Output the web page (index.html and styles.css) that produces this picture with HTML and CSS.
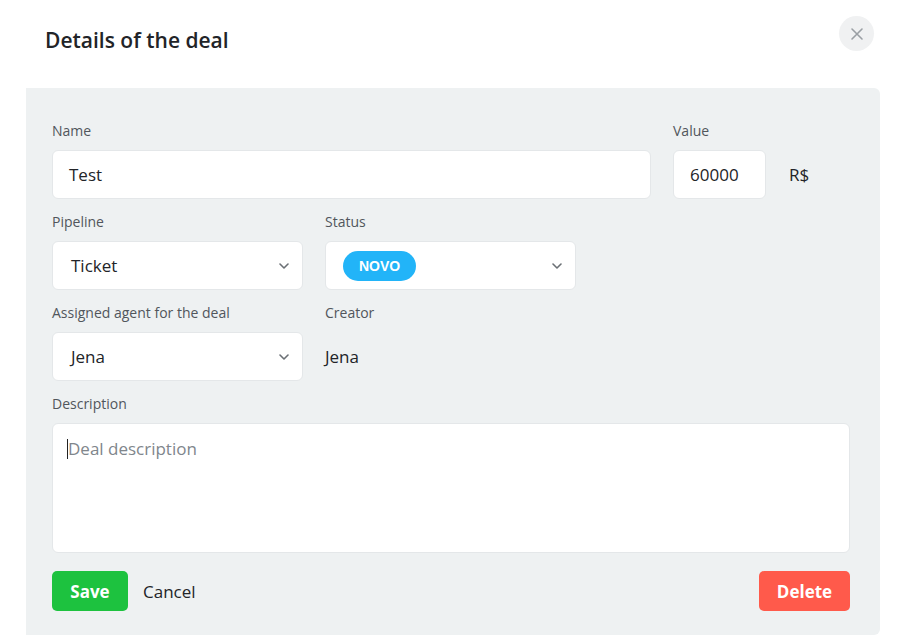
FILE: index.html
```html
<!DOCTYPE html>
<html>
<head>
<meta charset="utf-8">
<link rel="stylesheet" href="styles.css">
</head>
<body>
<div class="modal">
  <div class="header">
    <h1 class="title">Details of the deal</h1>
    <button class="close" aria-label="Close">
      <svg width="14" height="14" viewBox="0 0 14 14"><path d="M2 2L12 12M12 2L2 12" stroke="#9a9fa4" stroke-width="1.6" stroke-linecap="round" fill="none"/></svg>
    </button>
  </div>
  <div class="panel">
    <div class="row">
      <div class="field f-name">
        <label class="label">Name</label>
        <div class="input">Test</div>
      </div>
      <div class="field f-value">
        <label class="label">Value</label>
        <div class="value-line">
          <div class="input value-input">60000</div>
          <span class="currency">R$</span>
        </div>
      </div>
    </div>
    <div class="row">
      <div class="field f-half">
        <label class="label">Pipeline</label>
        <div class="input select"><span class="sel-text">Ticket</span><svg class="chev" width="10" height="6" viewBox="0 0 10 6"><path d="M1 1L5 5L9 1" stroke="#6b7075" stroke-width="1.6" fill="none" stroke-linecap="round" stroke-linejoin="round"/></svg></div>
      </div>
      <div class="field f-half">
        <label class="label">Status</label>
        <div class="input select status"><span class="badge">NOVO</span><svg class="chev" width="10" height="6" viewBox="0 0 10 6"><path d="M1 1L5 5L9 1" stroke="#6b7075" stroke-width="1.6" fill="none" stroke-linecap="round" stroke-linejoin="round"/></svg></div>
      </div>
    </div>
    <div class="row">
      <div class="field f-half">
        <label class="label">Assigned agent for the deal</label>
        <div class="input select"><span class="sel-text">Jena</span><svg class="chev" width="10" height="6" viewBox="0 0 10 6"><path d="M1 1L5 5L9 1" stroke="#6b7075" stroke-width="1.6" fill="none" stroke-linecap="round" stroke-linejoin="round"/></svg></div>
      </div>
      <div class="field f-half">
        <label class="label">Creator</label>
        <div class="plain">Jena</div>
      </div>
    </div>
    <div class="row">
      <div class="field f-full">
        <label class="label">Description</label>
        <div class="textarea"><span class="caret"></span><span class="placeholder">Deal description</span></div>
      </div>
    </div>
    <div class="actions">
      <div class="left-actions">
        <button class="btn save">Save</button>
        <button class="link">Cancel</button>
      </div>
      <button class="btn delete">Delete</button>
    </div>
  </div>
</div>
</body>
</html>
```
FILE: styles.css
```css
* { box-sizing: border-box; }
html, body { margin: 0; padding: 0; background: #ffffff; }
body {
  font-family: "Open Sans", "Noto Sans", "Liberation Sans", sans-serif;
  color: #222428;
  width: 899px;
  height: 644px;
  overflow: hidden;
}
.modal { padding: 0 0 0 26px; }
.header {
  height: 88px;
  display: flex;
  align-items: flex-start;
  justify-content: space-between;
  padding-right: 25px;
}
.title {
  margin: 26px 0 0 19px;
  font-size: 21px;
  font-weight: 600;
  line-height: 28px;
  color: #222428;
}
.close {
  margin-top: 16px;
  width: 35px;
  height: 35px;
  border-radius: 50%;
  border: none;
  background: #f0f1f2;
  display: flex;
  align-items: center;
  justify-content: center;
  padding: 0;
}
.panel {
  width: 854px;
  height: 547px;
  background: #eef1f2;
  border-radius: 0 6px 6px 0;
  padding: 33px 30px 0 26px;
}
.row { display: flex; gap: 22px; margin-bottom: 13px; }
.field { display: flex; flex-direction: column; }
.label {
  font-size: 14px;
  line-height: 20px;
  color: #51565c;
  margin-bottom: 9px;
}
.f-name { width: 599px; }
.f-value { flex: 1; }
.f-half { width: 251px; }
.f-full { width: 798px; }
.input {
  height: 49px;
  background: #fff;
  border: 1px solid #e4e7e9;
  border-radius: 6px;
  font-size: 17px;
  line-height: 47px;
  padding: 0 16px;
  color: #222428;
}
.value-line { display: flex; align-items: center; gap: 23px; }
.value-input { width: 93px; }
.currency { font-size: 17px; color: #222428; }
.select {
  display: flex;
  align-items: center;
  justify-content: space-between;
  padding: 0 13px 0 18px;
}
.status { padding-left: 17px; }
.badge {
  background: #22b4f8;
  color: #fff;
  font-weight: 700;
  font-size: 14px;
  line-height: 30px;
  height: 30px;
  padding: 0 16px;
  border-radius: 15px;
  font-family: "Liberation Sans", "Open Sans", sans-serif;
}
.chev { display: block; }
.plain { font-size: 17px; line-height: 49px; color: #222428; }
.textarea {
  height: 130px;
  background: #fff;
  border: 1px solid #e4e7e9;
  border-radius: 6px;
  padding: 13px 14px;
  font-size: 17px;
  line-height: 24px;
  display: flex;
  align-items: flex-start;
}
.caret { width: 1px; height: 20px; background: #222; margin-top: 2px; }
.placeholder { color: #80868c; }
.actions {
  display: flex;
  justify-content: space-between;
  align-items: center;
  margin-top: 18px;
}
.left-actions { display: flex; align-items: center; gap: 15px; }
.btn {
  height: 40px;
  border: none;
  border-radius: 5px;
  color: #fff;
  font-family: inherit;
  font-size: 17px;
  font-weight: 700;
  padding: 0;
}
.save { width: 76px; background: #1dc23f; }
.delete { width: 91px; background: #ff5a4b; }
.link {
  background: none;
  border: none;
  padding: 0;
  font-family: inherit;
  font-size: 17px;
  color: #222428;
}
```
